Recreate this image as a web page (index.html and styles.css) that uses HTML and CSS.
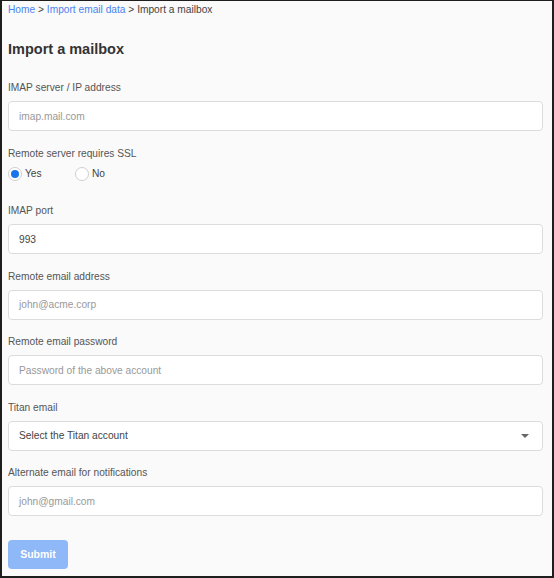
FILE: index.html
```html
<!DOCTYPE html>
<html>
<head>
<meta charset="utf-8">
<link rel="stylesheet" href="styles.css">
</head>
<body>
<div class="frame">
  <nav class="crumbs"><a href="#">Home</a> &gt; <a href="#">Import email data</a> &gt; Import a mailbox</nav>
  <h1 class="title">Import a mailbox</h1>
  <form class="form">
    <div class="field">
      <label class="label">IMAP server / IP address</label>
      <div class="input placeholder">imap.mail.com</div>
    </div>
    <div class="field ssl">
      <label class="label">Remote server requires SSL</label>
      <div class="radios">
        <span class="radio-opt"><span class="radio checked"></span>Yes</span>
        <span class="radio-opt"><span class="radio"></span>No</span>
      </div>
    </div>
    <div class="field">
      <label class="label">IMAP port</label>
      <div class="input">993</div>
    </div>
    <div class="field">
      <label class="label">Remote email address</label>
      <div class="input placeholder">john@acme.corp</div>
    </div>
    <div class="field">
      <label class="label">Remote email password</label>
      <div class="input placeholder">Password of the above account</div>
    </div>
    <div class="field">
      <label class="label">Titan email</label>
      <div class="input select">Select the Titan account<span class="caret"></span></div>
    </div>
    <div class="field">
      <label class="label">Alternate email for notifications</label>
      <div class="input placeholder">john@gmail.com</div>
    </div>
    <button type="button" class="submit">Submit</button>
  </form>
</div>
</body>
</html>
```
FILE: styles.css
```css
html, body {
  margin: 0;
  padding: 0;
}
body {
  font-family: "Liberation Sans", Arial, sans-serif;
  background: #fff;
}
.frame {
  box-sizing: border-box;
  width: 554px;
  height: 578px;
  background: #fafafa;
  border-style: solid;
  border-color: #1e1e1e;
  border-width: 1px 2px 2px 2px;
  padding: 2px 9px 0 6px;
  color: #444;
}
.crumbs {
  font-size: 10.2px;
  line-height: 14px;
  color: #444;
}
.crumbs a {
  color: #4c84f0;
  text-decoration: none;
}
.title {
  font-size: 14.5px;
  font-weight: bold;
  color: #333;
  margin: 0;
  padding-top: 23px;
  line-height: 18px;
}
.form {
  margin-top: 22px;
  display: flex;
  flex-direction: column;
}
.field {
  display: flex;
  flex-direction: column;
  margin-bottom: 14.5px;
}
.label {
  font-size: 10.2px;
  line-height: 14px;
  padding-top: 1px;
  height: 13px;
  color: #555;
  margin-bottom: 7px;
}
.input {
  box-sizing: border-box;
  height: 30px;
  border: 1px solid #dcdcdc;
  border-radius: 4px;
  background: #fff;
  padding: 0 10px;
  display: flex;
  align-items: center;
  font-size: 10.2px;
  color: #444;
}
.placeholder {
  color: #999;
}
.select {
  justify-content: space-between;
  color: #444;
}
.caret {
  width: 0;
  height: 0;
  border-left: 4px solid transparent;
  border-right: 4px solid transparent;
  border-top: 4px solid #666;
  margin-right: 3px;
}
.ssl {
  margin-bottom: 22.5px;
}
.radios {
  display: flex;
  gap: 20px;
  height: 14px;
}
.radio-opt {
  display: flex;
  align-items: center;
  gap: 3px;
  font-size: 10.2px;
  color: #444;
  width: 47px;
}
.radio {
  box-sizing: border-box;
  width: 14px;
  height: 14px;
  border-radius: 50%;
  border: 1px solid #cfcfcf;
  background: #fff;
  position: relative;
}
.radio.checked::after {
  content: "";
  position: absolute;
  left: 2px;
  top: 2px;
  width: 8px;
  height: 8px;
  border-radius: 50%;
  background: #1a73e8;
}
.submit {
  align-self: flex-start;
  margin-top: 9px;
  width: 60px;
  height: 29px;
  border: none;
  border-radius: 4px;
  background: #8fb8f8;
  color: #fff;
  font-family: "Liberation Sans", Arial, sans-serif;
  font-weight: bold;
  font-size: 10.5px;
  padding: 0;
}
```
